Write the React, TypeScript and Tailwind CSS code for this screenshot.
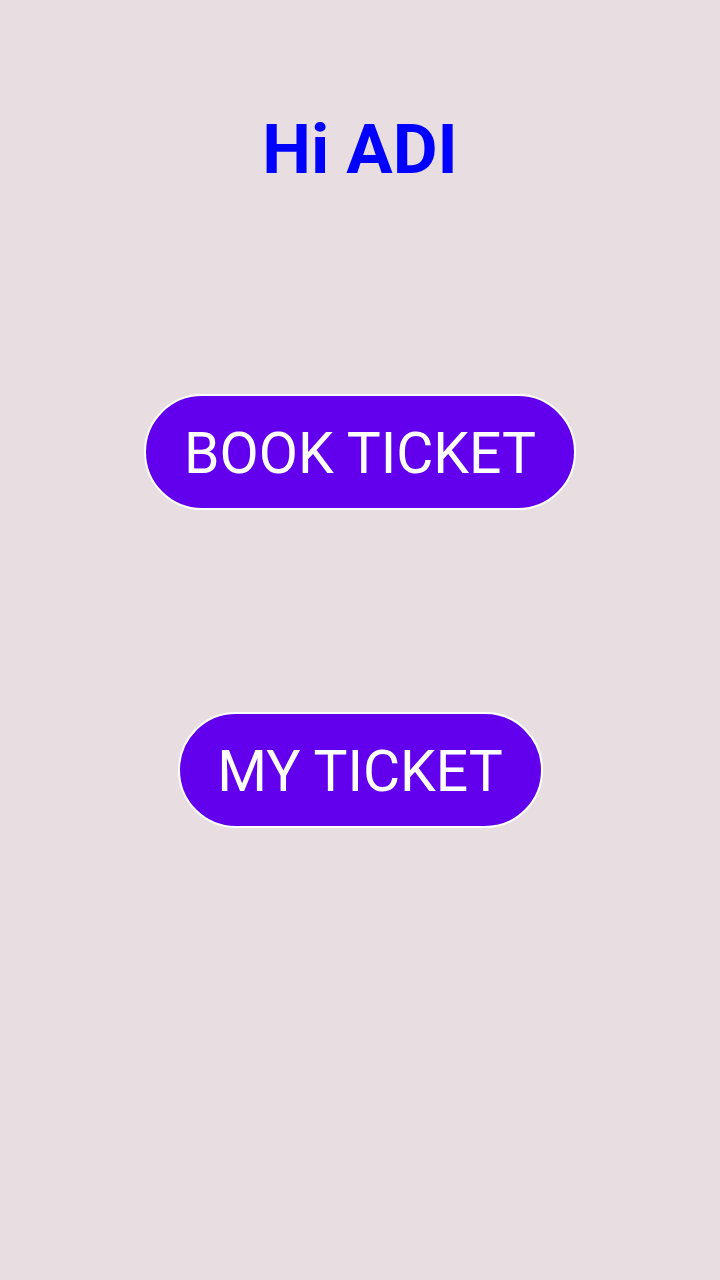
export default function App() {
  return (
    <div
      className="flex min-h-[1280px] w-full flex-col items-center bg-[#e8dde0]"
      style={{ fontFamily: "Roboto, 'Liberation Sans', sans-serif" }}
    >
      <h1 className="mt-[115px] text-[69px] font-bold leading-[69px] text-[#0000ff]">
        Hi ADI
      </h1>

      <button className="mt-[210px] flex h-[116px] w-[432px] items-center justify-center rounded-full border-2 border-white bg-[#6200ee] pt-[2px] text-[57px] leading-none text-white">
        BOOK TICKET
      </button>

      <button className="mt-[202px] flex h-[116px] w-[365px] items-center justify-center rounded-full border-2 border-white bg-[#6200ee] pt-[2px] text-[57px] leading-none text-white">
        MY TICKET
      </button>
    </div>
  );
}
